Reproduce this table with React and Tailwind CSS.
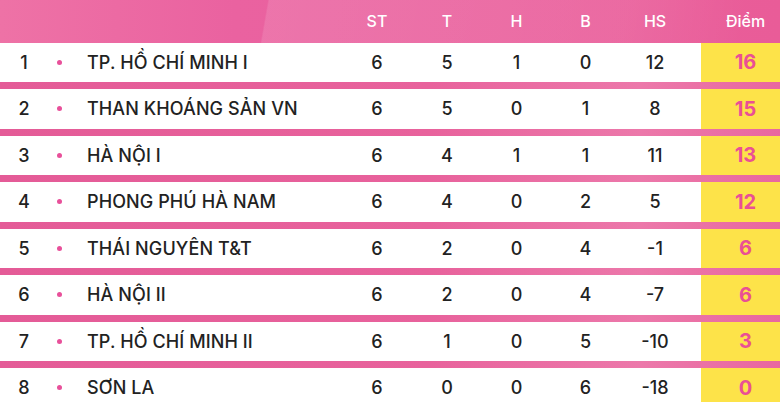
import React from "react";

const rows = [
  [1, "TP. HỒ CHÍ MINH I", 6, 5, 1, 0, 12, 16],
  [2, "THAN KHOÁNG SẢN VN", 6, 5, 0, 1, 8, 15],
  [3, "HÀ NỘI I", 6, 4, 1, 1, 11, 13],
  [4, "PHONG PHÚ HÀ NAM", 6, 4, 0, 2, 5, 12],
  [5, "THÁI NGUYÊN T&T", 6, 2, 0, 4, -1, 6],
  [6, "HÀ NỘI II", 6, 2, 0, 4, -7, 6],
  [7, "TP. HỒ CHÍ MINH II", 6, 1, 0, 5, -10, 3],
  [8, "SƠN LA", 6, 0, 0, 6, -18, 0],
];

function Stripe() {
  return (
    <div className="h-[7px] bg-[linear-gradient(90deg,#e45b97_0%,#e8629c_55%,#ec78aa_82%,#e9679f_100%)]" />
  );
}

export default function App() {
  return (
    <div
      className="w-[780px] h-[402px] overflow-hidden bg-[#e9639d] text-[#222]"
      style={{ fontFamily: "Inter, 'Noto Sans', sans-serif" }}
    >
      <div className="relative h-[42.5px] flex items-center overflow-hidden bg-[linear-gradient(90deg,#ee72a6_0%,#ea62a0_30%,#e95c98_100%)]">
        <div className="absolute inset-0 bg-[linear-gradient(100deg,transparent_0%,transparent_34%,rgba(255,255,255,0.12)_34.2%,rgba(255,255,255,0.08)_80%,transparent_95%)]" />
        <div className="relative flex w-full items-center text-white text-[16px] font-medium">
          <div className="w-[342px]" />
          <div className="w-[70px] text-center">ST</div>
          <div className="w-[70px] text-center">T</div>
          <div className="w-[69px] text-center">H</div>
          <div className="w-[69px] text-center">B</div>
          <div className="w-[70px] text-center">HS</div>
          <div className="w-[11px]" />
          <div className="flex-1 text-center pl-[10px]">Điểm</div>
        </div>
      </div>
      {rows.map((r, i) => (
        <div key={i}>
          <div className="h-[39.5px] flex items-center bg-white text-[18px] font-medium">
            <div className="w-[48px] text-center">{r[0]}</div>
            <div className="w-[22px] flex justify-center">
              <span className="w-[5px] h-[5px] rounded-full bg-[#e8509a]" />
            </div>
            <div className="w-[272px] pl-[17px] tracking-[0.1px]">{r[1]}</div>
            <div className="w-[70px] text-center">{r[2]}</div>
            <div className="w-[70px] text-center">{r[3]}</div>
            <div className="w-[69px] text-center">{r[4]}</div>
            <div className="w-[69px] text-center">{r[5]}</div>
            <div className="w-[70px] text-center">{r[6]}</div>
            <div className="w-[11px]" />
            <div className="flex-1 self-stretch flex items-center justify-center pl-[10px] bg-[#fde349] text-[#ea4f95] text-[20px] font-bold">
              {r[7]}
            </div>
          </div>
          <Stripe />
        </div>
      ))}
    </div>
  );
}
